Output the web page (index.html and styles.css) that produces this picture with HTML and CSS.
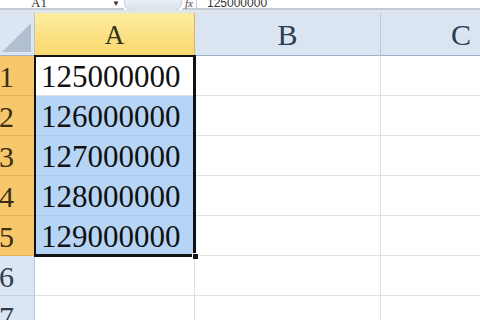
FILE: index.html
```html
<!DOCTYPE html>
<html lang="zh-CN">
<head>
  <meta charset="UTF-8">
  <title>Excel</title>
  <link rel="stylesheet" href="styles.css">
</head>
<body>
  <div class="formula-bar">
    <div class="name-box">A1</div>
    <div class="drop">&#9660;</div>
    <div class="btn-group"></div>
    <div class="fx">fx</div>
    <div class="formula">125000000</div>
  </div>

  <div class="sheet">
    <div class="corner"><span class="tri"></span></div>
    <div class="col-head on">A</div>
    <div class="col-head">B</div>
    <div class="col-head last">C</div>

    <div class="row-head on">1</div>
    <div class="cell">125000000</div>
    <div class="cell"></div>
    <div class="cell"></div>

    <div class="row-head on">2</div>
    <div class="cell sel">126000000</div>
    <div class="cell"></div>
    <div class="cell"></div>

    <div class="row-head on">3</div>
    <div class="cell sel">127000000</div>
    <div class="cell"></div>
    <div class="cell"></div>

    <div class="row-head on">4</div>
    <div class="cell sel">128000000</div>
    <div class="cell"></div>
    <div class="cell"></div>

    <div class="row-head on">5</div>
    <div class="cell sel">129000000</div>
    <div class="cell"></div>
    <div class="cell"></div>

    <div class="row-head">6</div>
    <div class="cell"></div>
    <div class="cell"></div>
    <div class="cell"></div>

    <div class="row-head">7</div>
    <div class="cell"></div>
    <div class="cell"></div>
    <div class="cell"></div>

    <!-- 选区边框（盖在单元格上） -->
    <div class="range"><span class="handle"></span></div>
  </div>
</body>
</html>
```

FILE: styles.css
```css
* {
  margin: 0;
  padding: 0;
  box-sizing: border-box;
}
body {
  width: 480px;
  height: 320px;
  overflow: hidden;
  background-color: #fff;
  font-family: "Liberation Serif", "Noto Sans CJK SC", serif;
}
.formula-bar {
  display: flex;
  height: 13px;
  overflow: hidden;
  border-bottom: 3px solid #dfe6ee;
  font-family: "Liberation Sans", sans-serif;
  font-size: 12px;
  line-height: 12px;
  color: #333;
}
.formula-bar > div {
  margin-top: -3px;
}
.name-box {
  width: 112px;
  padding-left: 31px;
  font-family: "Liberation Serif", serif;
  font-size: 13px;
  border-bottom: 2px solid #c4ccd6;
}
.drop {
  width: 12px;
  font-size: 8px;
  margin-top: -2px !important;
  border-bottom: 2px solid #c4ccd6;
}
.btn-group {
  width: 58px;
  height: 14px;
  border: 1px solid #c6cfdb;
  border-radius: 0 0 8px 8px;
  background: linear-gradient(#eef2f7, #d9e1ea);
}
.fx {
  width: 15px;
  padding-left: 3px;
  font-family: "Liberation Serif", serif;
  font-style: italic;
  font-size: 11px;
  border-right: 1px solid #c4ccd6;
  border-bottom: 2px solid #c4ccd6;
  color: #444;
}
.formula {
  flex: 1;
  padding-left: 10px;
  border-bottom: 2px solid #c4ccd6;
}
.sheet {
  position: relative;
  display: grid;
  grid-template-columns: 35px 160px 186px 160px;
  grid-template-rows: 43px repeat(7, 40px);
}
.corner {
  position: relative;
  background-color: #dce6f2;
  border-right: 1px solid #b6c6d8;
  border-bottom: 1px solid #9eb3ca;
}
.tri {
  position: absolute;
  right: 3px;
  bottom: 3px;
  width: 0;
  height: 0;
  border-left: 29px solid transparent;
  border-bottom: 29px solid #b1bfd1;
}
.col-head {
  text-align: center;
  line-height: 44px;
  font-size: 30px;
  color: #2b3d52;
  background-color: #dbe5f1;
  border-right: 1px solid #b9c8da;
  border-bottom: 1px solid #9eb3ca;
}
.col-head.on {
  color: #333319;
  font-size: 27px;
  background: linear-gradient(#fdec9f, #f9d86e);
  border-right-color: #d9b85a;
  border-bottom-color: #c9a64a;
}
.col-head.last {
  border-right: none;
}
.row-head {
  line-height: 41px;
  font-size: 30px;
  color: #2b3d52;
  background-color: #dce6f2;
  border-right: 1px solid #b6c6d8;
  border-bottom: 1px solid #c3d1e0;
  text-indent: -1px;
}
.row-head.on {
  color: #3a2f12;
  background-color: #f7c76c;
  border-right-color: #d2a54a;
  border-bottom-color: #e1b35a;
}
.cell {
  padding-left: 6px;
  line-height: 42px;
  font-size: 31px;
  color: #111;
  border-right: 1px solid #e0e0e0;
  border-bottom: 1px solid #e0e0e0;
  white-space: nowrap;
}
.cell.sel {
  background-color: #b6d5f6;
  border-bottom-color: #a9cbee;
}
.range {
  position: absolute;
  left: 34px;
  top: 42px;
  width: 162px;
  height: 202px;
  border: 2px solid #111;
  border-right-width: 3px;
  border-bottom-width: 3px;
  pointer-events: none;
}
.handle {
  position: absolute;
  right: -6px;
  bottom: -6px;
  width: 7px;
  height: 7px;
  background-color: #111;
  border: 1px solid #fff;
}
```
